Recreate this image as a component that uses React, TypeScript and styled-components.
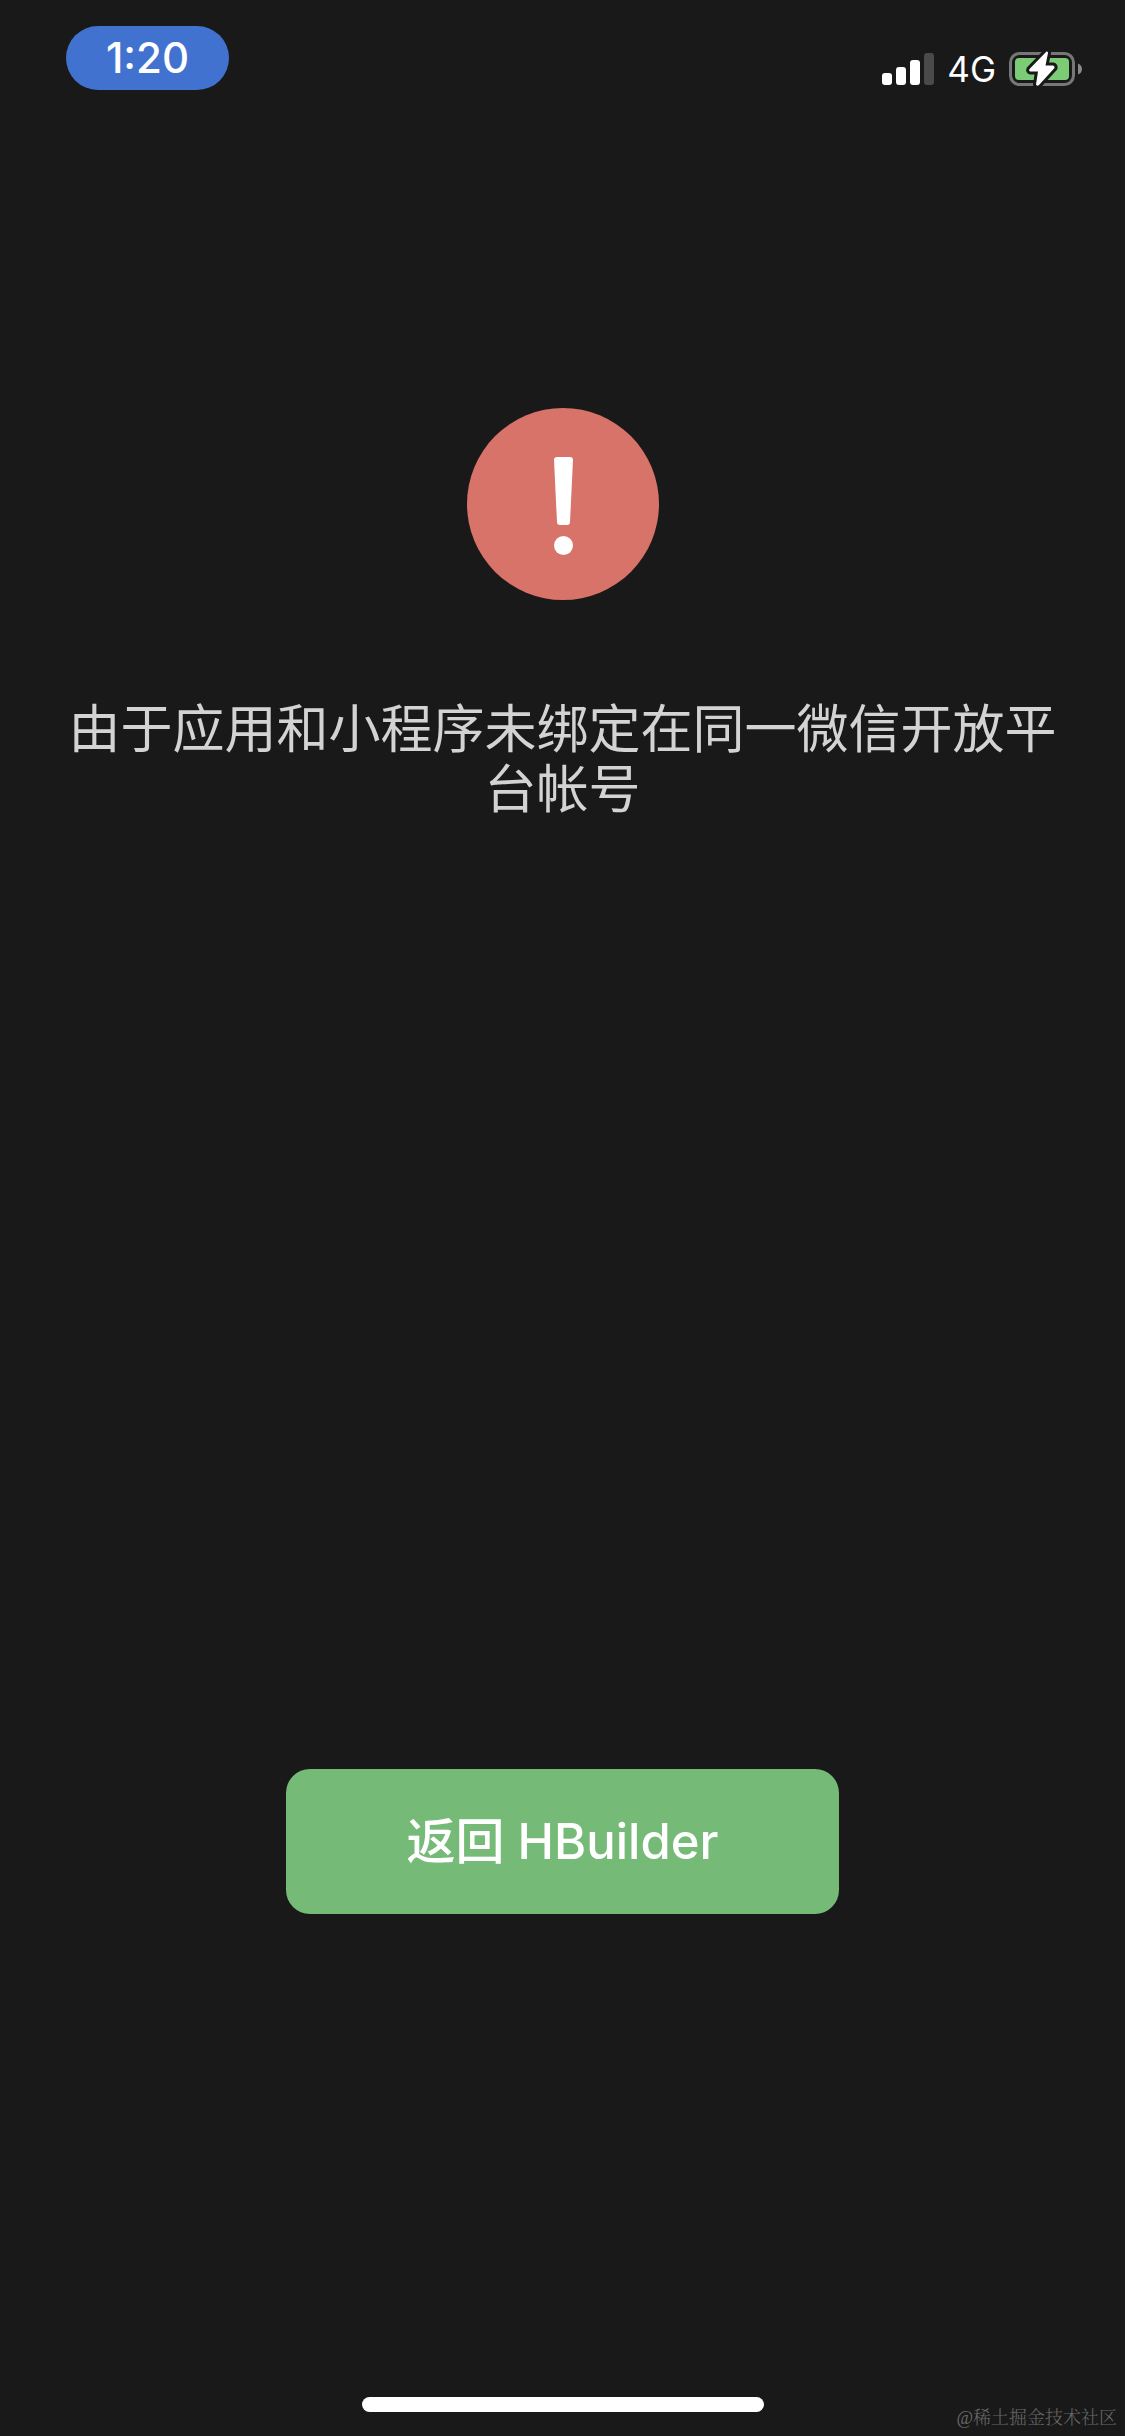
import React from "react";
import styled, { createGlobalStyle } from "styled-components";

const GlobalStyle = createGlobalStyle`
  *, *::before, *::after { box-sizing: border-box; }
  body {
    margin: 0;
    background: #191919;
    font-family: Inter, "Noto Sans CJK SC", sans-serif;
  }
`;

const Screen = styled.div`
  position: relative;
  display: flex;
  flex-direction: column;
  min-height: 100vh;
  background: #191919;
`;

const StatusBar = styled.header`
  display: flex;
  justify-content: space-between;
  align-items: flex-start;
  padding: 26px 42px 0 66px;
  height: 132px;
  color: #ffffff;
`;

const TimePill = styled.time`
  display: flex;
  align-items: center;
  justify-content: center;
  width: 163px;
  height: 64px;
  border-radius: 32px;
  background: #4272cf;
  font-size: 42px;
  line-height: 64px;
  font-weight: 500;
`;

const Indicators = styled.div`
  display: flex;
  align-items: center;
  gap: 13px;
  padding-top: 25px;
  height: 61px;
`;

const Network = styled.span`
  font-size: 35px;
  line-height: 36px;
`;

const Main = styled.main`
  flex: 1;
  display: flex;
  flex-direction: column;
  align-items: center;
  padding: 276px 60px 0;
`;

const Message = styled.h1`
  margin: 100px 0 0;
  color: #d3d3d3;
  font-size: 52px;
  line-height: 60px;
  font-weight: 400;
  text-align: center;
`;

const ReturnButton = styled.button`
  margin: auto 0 0;
  width: 55%;
  min-width: 360px;
  height: 145px;
  padding: 0;
  border: 0;
  border-radius: 24px;
  background: #76ba77;
  color: #ffffff;
  font-family: inherit;
  font-size: 49px;
  line-height: 60px;
  font-weight: 500;
  cursor: pointer;
`;

const Footer = styled.footer`
  display: flex;
  justify-content: center;
  align-items: flex-end;
  height: 522px;
  padding-bottom: 24px;
`;

const HomeIndicator = styled.div`
  width: 402px;
  height: 15px;
  border-radius: 8px;
  background: #ffffff;
`;

const Watermark = styled.small`
  position: absolute;
  right: 8px;
  bottom: 6px;
  color: #686868;
  font-family: "Liberation Serif", "Noto Serif CJK SC", "Noto Sans CJK SC", serif;
  font-size: 18px;
  line-height: 24px;
  font-weight: 300;
`;

function SignalIcon() {
  return (
    <svg width="52" height="34" viewBox="0 0 52 34" aria-label="Signal" role="img">
      <g fill="#fff">
        <rect x="0" y="21" width="10" height="12" rx="3" />
        <rect x="14" y="15" width="10" height="18" rx="3" />
        <rect x="28" y="8" width="10" height="25" rx="3" />
      </g>
      <rect x="42" y="1" width="10" height="32" rx="3" fill="#4a4a4a" />
    </svg>
  );
}

function BatteryIcon() {
  const bolt = "M37.5 0.5 L20.5 18 Q19.5 20 21.5 20.5 L29 20.5 L27 33.5 Q28 35.5 30 34 L45.5 17 Q46 15 44 14.5 L36.5 14.5 L39 2 Q39 0 37.5 0.5 Z";
  return (
    <svg width="74" height="36" viewBox="0 0 74 36" aria-label="Battery charging" role="img">
      <rect x="1.5" y="2.5" width="63" height="31" rx="9" fill="none" stroke="#777" strokeWidth="3" />
      <rect x="6" y="7" width="54" height="22" rx="4" fill="#7ccc77" />
      <path d="M69 12.5 Q73 14 73 18 Q73 22 69 23.5 Z" fill="#8a8a8a" />
      <path d={bolt} fill="#fff" stroke="#191919" strokeWidth="6" strokeLinejoin="round" />
      <path d={bolt} fill="#fff" />
    </svg>
  );
}

function WarningIcon() {
  return (
    <svg width="192" height="192" viewBox="0 0 192 192" aria-label="Error" role="img">
      <circle cx="96" cy="96" r="96" fill="#d77369" />
      <path
        d="M90 49 H103 Q106 49 106 52 L103 114 Q103 117 100 117 H93 Q90 117 90 114 L87 52 Q87 49 90 49 Z"
        fill="#fff"
      />
      <circle cx="96.500" cy="137.500" r="9.500" fill="#fff" />
    </svg>
  );
}

export default function App() {
  return (
    <Screen>
      <GlobalStyle />
      <StatusBar>
        <TimePill>1:20</TimePill>
        <Indicators>
          <SignalIcon />
          <Network>4G</Network>
          <BatteryIcon />
        </Indicators>
      </StatusBar>
      <Main>
        <WarningIcon />
        <Message>由于应用和小程序未绑定在同一微信开放平台帐号</Message>
        <ReturnButton type="button">返回 HBuilder</ReturnButton>
      </Main>
      <Footer>
        <HomeIndicator />
      </Footer>
      <Watermark>@稀土掘金技术社区</Watermark>
    </Screen>
  );
}
